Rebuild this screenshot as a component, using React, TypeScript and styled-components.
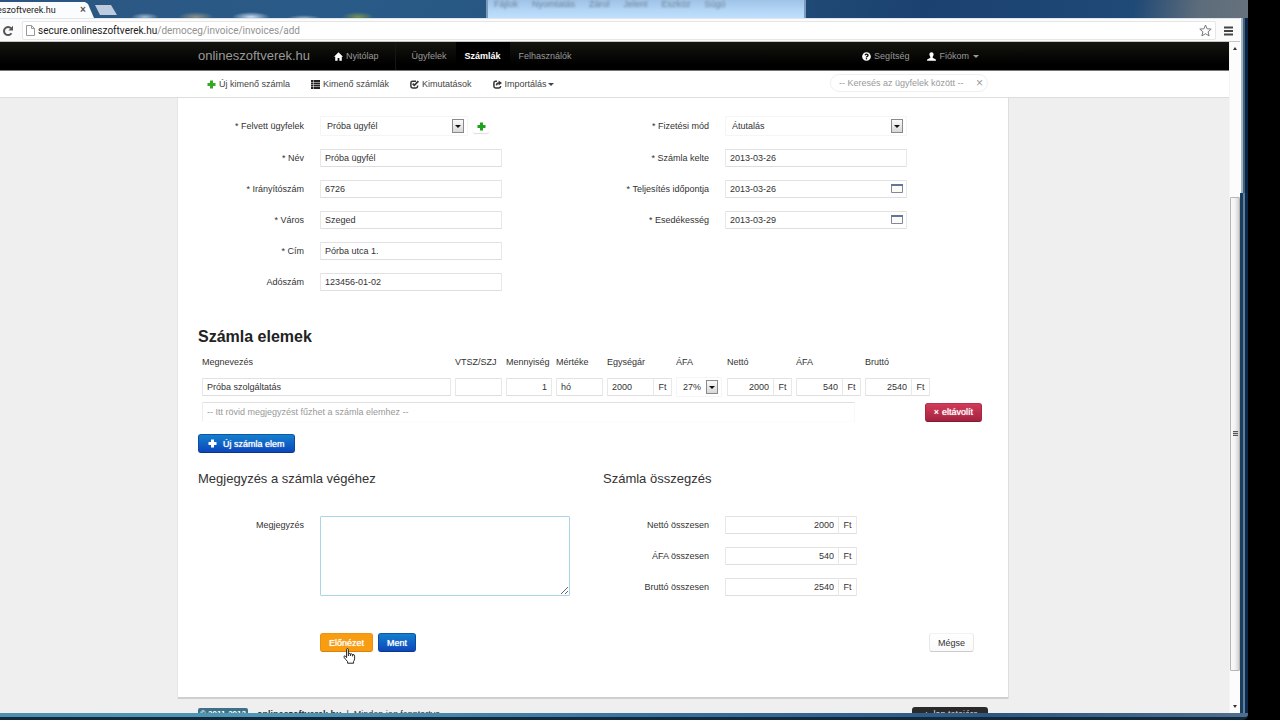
import React from "react";
import styled, { createGlobalStyle, css } from "styled-components";
import { FaQuestionCircle } from "react-icons/fa";

const GlobalStyle = createGlobalStyle`
  *, *::before, *::after { box-sizing: border-box; }
  body {
    margin: 0;
    background: #000;
    color: #333;
    font: 9px/18px "Liberation Sans", Arial, sans-serif;
  }
  input, select, textarea, button { font: inherit; color: inherit; margin: 0; }
  a { color: inherit; text-decoration: none; }
  svg { display: block; flex: none; }
`;

/* ---------- desktop and browser window ---------- */

const Desktop = styled.div`
  height: 100vh;
  padding-right: 32px;
  display: flex;
  overflow: hidden;
  background: #000;
`;

const BrowserWindow = styled.div`
  flex: 1;
  min-width: 0;
  margin-left: -43px;
  display: grid;
  grid-template-columns: minmax(0, 1fr) 8px;
  grid-template-rows: 18px 24px minmax(0, 1fr) 7px;
`;

const TitleBar = styled.div`
  grid-column: 1 / -1;
  display: flex;
  align-items: flex-end;
  overflow: hidden;
  background:
    radial-gradient(ellipse 14px 4px at 188px 17px, #9db6cc, transparent),
    radial-gradient(ellipse 18px 5px at 239px 17px, #8a9087, transparent),
    radial-gradient(ellipse 19px 5px at 294px 17px, #c9dcee, transparent),
    radial-gradient(ellipse 17px 3px at 347px 18px, #8fa9be, transparent),
    radial-gradient(ellipse 16px 5px at 401px 17px, #77914f, transparent),
    linear-gradient(100deg, #2c5580 0, #2a5b88 30%, #225078 60%, #1b4170 75%, #1f4976 91%, #5d6c7b 96%, #66727d 100%);
`;

const Tab = styled.div`
  width: 137px;
  height: 16px;
  padding: 0 6px 0 35px;
  display: flex;
  align-items: center;
  justify-content: space-between;
  background: #fbfcfd;
  clip-path: polygon(0 0, 128px 0, 131px 2px, 137px 16px, 0 16px);
  font: 9px/16px Roboto, sans-serif;
  color: #222;
`;

const TabClose = styled.button`
  width: 10px;
  height: 12px;
  padding: 0;
  border: 0;
  background: none;
  font: bold 10px/12px "Liberation Sans", sans-serif;
  color: #555;
`;

const NewTab = styled.button`
  width: 22px;
  height: 10px;
  margin: 0 0 3px 1px;
  padding: 0;
  border: 0;
  background: #bccbdd;
  clip-path: polygon(0 0, 16px 0, 22px 10px, 5px 10px);
`;

const BackgroundWindow = styled.div`
  width: 320px;
  height: 18px;
  margin-left: 369px;
  padding: 0 6px;
  display: flex;
  gap: 14px;
  border: solid #7d9cbb;
  border-width: 0 2px;
  background: linear-gradient(#9fc3e6, #b4d6f7 60%, #bfe0fb);
  color: #6c8297;
  line-height: 8px;

  span { filter: blur(1px); }
`;

const Toolbar = styled.div`
  padding: 3px 7px 2px 45px;
  display: flex;
  align-items: center;
  gap: 8px;
  background: #fbfbfb;
  border-top: 1px solid #dfe6ee;
  border-bottom: 1px solid #c5c5c5;
`;

const ToolButton = styled.button`
  padding: 0;
  border: 0;
  background: none;
  display: flex;
  color: #555;
`;

const AddressBox = styled.div`
  flex: 1;
  height: 19px;
  padding: 0 3px;
  display: flex;
  align-items: center;
  gap: 3px;
  background: #fff;
  border: 1px solid #e6e6e6;
  border-radius: 2px;
`;

const Address = styled.div`
  flex: 1;
  font: 10px/16px Roboto, sans-serif;
  color: #929292;

  b { font-weight: 400; color: #222; }
`;

const Edge = styled.div`
  grid-row: 2 / 4;
  grid-column: 2;
  background:
    linear-gradient(90deg, transparent 3px, #5f7f9f 3px, #5f7f9f 5px, #0d2848 5px) 0 100% / 8px calc(100% - 175px) no-repeat,
    linear-gradient(90deg, #fff 1px, #a3b4c2 1px, #a3b4c2 3px, #44607a 3px, #44607a 5px, #0b2544 5px) 0 0 / 8px 175px no-repeat,
    #1a3e5c;
`;

const BottomEdge = styled.div`
  grid-column: 1 / -1;
  border-bottom: 3px solid #12293c;
  border-bottom-right-radius: 5px;
  background: linear-gradient(90deg, #4c8fae, #4f97b6 25%, #39719b 55%, #2d5782 80%, #4f6f8e);
`;

const Viewport = styled.div`
  display: flex;
  overflow: hidden;
  background: #efefef;
`;

const Page = styled.div`
  flex: 1;
  min-width: 0;
`;

const ScrollBar = styled.div`
  width: 11px;
  display: flex;
  flex-direction: column;
  align-items: center;
  background: #fcfcfc;
  border-left: 1px solid #f4f4f4;
`;

const ScrollArrow = styled.div<{ $down?: boolean }>`
  height: 13px;
  display: flex;
  align-items: center;

  &::before {
    content: "";
    border: 2px solid transparent;
    ${(p) =>
      p.$down
        ? "border-top: 3px solid #333; border-bottom: 0;"
        : "border-bottom: 3px solid #333; border-top: 0;"}
  }
`;

const ScrollGap = styled.div<{ $grow: number }>`
  flex: ${(p) => p.$grow} 1 0;
`;

const ScrollThumb = styled.div`
  flex: 474 1 0;
  width: 10px;
  display: flex;
  align-items: center;
  justify-content: center;
  border: 1px solid #b5b5b5;
  border-radius: 1px;
  background: linear-gradient(90deg, #fafafa, #f2f2f2 50%, #d2d2d2);

  &::before {
    content: "";
    width: 5px;
    height: 5px;
    background: repeating-linear-gradient(#555 0, #555 1px, #ccc 1px, #ccc 2px);
  }
`;

/* ---------- site header ---------- */

const Container = styled.div`
  max-width: 790px;
  margin: 0 auto;
  display: flex;
  align-items: center;
`;

const NavBar = styled.header`
  height: 29px;
  background: linear-gradient(#14150f, #000 80%);
  border-bottom: 1px solid #777;
  color: #999;
`;

const Brand = styled.a`
  margin-right: 15px;
  font-size: 13px;
  line-height: 28px;
`;

const NavLink = styled.a<{ $active?: boolean }>`
  padding: 0 9px;
  display: flex;
  align-items: center;
  gap: 3px;
  line-height: 28px;

  svg { color: #fff; }

  ${(p) =>
    p.$active &&
    css`
      background: #000;
      color: #fff;
      font-weight: 700;
    `}
`;

const Divider = styled.span`
  width: 1px;
  height: 28px;
  margin: 0 7px;
  background: #161616;
`;

const Spacer = styled.div`
  flex: 1;
`;

const Caret = styled.span`
  margin-left: 1px;
  border: 3px solid transparent;
  border-top-color: currentColor;
  border-bottom: 0;
`;

const SubBar = styled.nav`
  height: 27px;
  background: #fff;
  border-bottom: 1px solid #ddd;
  color: #444;
`;

const SubLink = styled.a`
  padding: 0 12px 0 9px;
  display: flex;
  align-items: center;
  gap: 3px;
  line-height: 27px;

  ${Caret} { margin-left: -2px; }
`;

const SearchBox = styled.div`
  width: 158px;
  height: 18px;
  margin-bottom: 3px;
  padding: 0 4px 0 8px;
  display: flex;
  align-items: center;
  border: 1px solid #efefef;
  border-radius: 9px;

  input {
    flex: 1;
    min-width: 0;
    padding: 0;
    border: 0;
    outline: 0;
    background: none;
    line-height: 14px;
  }
  input::placeholder { color: #999; opacity: 1; }
  button {
    padding: 0;
    border: 0;
    background: none;
    color: #999;
    font-size: 12px;
    line-height: 14px;
  }
`;

/* ---------- invoice form ---------- */

const Card = styled.form`
  max-width: 830px;
  margin: 0 auto;
  padding: 18px 20px 45px;
  background: #fff;
  border-bottom: 2px solid #cfcfcf;
  box-shadow: 1px 0 0 #ddd, -1px 0 0 #e6e6e6;
`;

const Columns = styled.div`
  display: grid;
  grid-template-columns: minmax(0, 1fr) minmax(0, 1fr);
  column-gap: 20px;
`;

const Fields = styled.div`
  display: grid;
  align-content: start;
  row-gap: 13px;
`;

const Field = styled.div<{ $top?: boolean }>`
  display: flex;
  align-items: ${(p) => (p.$top ? "flex-start" : "center")};

  > label {
    width: 106px;
    margin-right: 16px;
    text-align: right;
  }
`;

const control = css`
  height: 18px;
  padding: 0 4px;
  background: #fff;
  border: 1px solid;
  border-color: #e2e2e2 #e8e8e8 #dedede;
  border-radius: 1px;
  outline: 0;
  line-height: 16px;
`;

const TextInput = styled.input<{ $right?: boolean }>`
  ${control}
  width: 100%;
  min-width: 0;
  text-align: ${(p) => (p.$right ? "right" : "left")};
  &::placeholder { color: #999; opacity: 1; }
`;

const InputBox = styled.div<{ $width: number }>`
  position: relative;
  width: ${(p) => p.$width}px;
  display: flex;
`;

const DateButton = styled.button`
  position: absolute;
  top: 4px;
  right: 4px;
  padding: 0;
  border: 0;
  background: none;
`;

const Unit = styled.span`
  width: 18px;
  height: 18px;
  flex: none;
  border: 1px solid;
  border-color: #e2e2e2 #e8e8e8 #dedede;
  border-left: 0;
  border-radius: 0 1px 1px 0;
  line-height: 16px;
  text-align: center;
`;

const SelectBox = styled.div<{ $width: number }>`
  position: relative;
  width: ${(p) => p.$width}px;

  select {
    ${control}
    display: block;
    width: 100%;
    height: 20px;
    padding: 0 6px;
    border-color: #f5f5f5;
    line-height: 18px;
    appearance: none;
  }

  &::before {
    content: "";
    position: absolute;
    top: 3px;
    right: 4px;
    width: 12px;
    height: 14px;
    border: 1px solid #8a8a8a;
    background: linear-gradient(#fafafa, #d8d8d8);
    pointer-events: none;
  }
  &::after {
    content: "";
    position: absolute;
    top: 9px;
    right: 7px;
    border: 3px solid transparent;
    border-top-color: #111;
    border-bottom: 0;
    pointer-events: none;
  }
`;

const AddClient = styled.button`
  width: 16px;
  height: 14px;
  margin-left: 5px;
  padding: 0;
  display: flex;
  align-items: center;
  justify-content: center;
  border: 0;
  border-radius: 2px;
  background: #fff;
  box-shadow: 0 1px 1px #ddd;
  color: #1fa01f;
`;

const Title = styled.h2`
  margin: 36px 0 0;
  font: bold 16px/20px "Liberation Sans", Arial, sans-serif;
  color: #222;
`;

const Subtitle = styled.h3`
  margin: 16px 0 27px;
  font: 13px/20px "Liberation Sans", Arial, sans-serif;
`;

const Items = styled.table`
  width: 100%;
  table-layout: fixed;
  border-collapse: collapse;

  th {
    padding: 6px 0 7px 4px;
    font-weight: 400;
    text-align: left;
    white-space: nowrap;
  }
  td {
    padding: 0 0 6px 4px;
    vertical-align: top;
  }
  tr:last-child td { padding-bottom: 0; }
  ${SelectBox} { margin: -1px 0; }
`;

const NoteRow = styled.div`
  padding-right: 6px;
  display: flex;
  align-items: center;
  justify-content: space-between;

  ${TextInput} {
    width: 653px;
    height: 20px;
    border-color: #e0e0e0 #f8f8f8 #fcfcfc #eee;
  }
`;

const tones = {
  blue: css`background: linear-gradient(#1480cc, #0c46bd); border-color: #0f55ad #0d49a4 #0a3683; color: #fff;`,
  red: css`background: linear-gradient(#d23a58, #a32340); border-color: #b53350 #a52844 #81192f; color: #fff;`,
  orange: css`background: #f89c12; border-color: #ee9413 #ea8f10 #d98207; color: #fff;`,
  plain: css`background: linear-gradient(#fff, #fafafa); border-color: #f2f2f2 #e8e8e8 #ccc; color: #333;`,
};

const Button = styled.button<{ $tone: keyof typeof tones }>`
  position: relative;
  height: 19px;
  padding: 0 8px;
  display: inline-flex;
  align-items: center;
  gap: 6px;
  border: 1px solid;
  border-radius: 3px;
  line-height: 16px;
  ${(p) => tones[p.$tone]}
  text-shadow: ${(p) => (p.$tone === "plain" ? "none" : "0 0 1px currentColor")};
`;

const AddItem = styled(Button)`
  margin-top: 12px;
  padding: 0 9px;
  display: flex;
`;

const RemoveItem = styled(Button)`
  gap: 3px;
`;

const NoteArea = styled.textarea`
  ${control}
  width: 250px;
  height: 80px;
  border-color: #a9d6e6;
`;

const Actions = styled.div`
  margin-top: 37px;
  padding: 0 14px 0 122px;
  display: flex;
  gap: 5px;
`;

const Pointer = styled.svg`
  position: absolute;
  top: 14px;
  left: 22px;
  z-index: 1;
`;

/* ---------- footer ---------- */

const Footer = styled.footer`
  max-width: 790px;
  margin: 0 auto;
  padding-top: 8px;
  display: flex;
  align-items: flex-start;
  gap: 9px;
`;

const Badge = styled.span`
  margin-top: 1px;
  padding: 0 2px;
  border-radius: 2px;
  background: #3d7187;
  color: #fff;
  font-weight: 700;
  font-size: 8px;
  line-height: 11px;
`;

const Copyright = styled.span`
  line-height: 14px;
`;

const TopLink = styled.a`
  width: 76px;
  border-radius: 3px 3px 0 0;
  background: #2a2a2a;
  color: #ddd;
  line-height: 15px;
  text-align: center;
`;

/* ---------- drawings ---------- */

const ReloadIcon = () => (
  <svg width="12" height="12" viewBox="0 0 12 12" fill="none" stroke="#555" strokeWidth="2">
    <path d="M9.4 8.2A4 4 0 1 1 9 3.4" />
    <path d="M11 .8V5.4H6.4Z" fill="#555" stroke="none" />
  </svg>
);

const PageIcon = () => (
  <svg width="9" height="11" viewBox="0 0 9 11" fill="#fff" stroke="#999">
    <path d="M.5.5H5.5L8.5 3.5V10.5H.5ZM5.5.5V3.5H8.5" />
  </svg>
);

const StarIcon = () => (
  <svg width="13" height="13" viewBox="0 0 13 13" fill="#fff" stroke="#777">
    <path d="M6.5 1 8.1 4.8 12.2 5.1 9.1 7.8 10.1 11.9 6.5 9.7 2.9 11.9 3.9 7.8.8 5.1 4.9 4.8Z" />
  </svg>
);

const MenuIcon = () => (
  <svg width="9" height="10" viewBox="0 0 9 10" stroke="#444" strokeWidth="2">
    <path d="M0 1.5H9M0 5H9M0 8.5H9" />
  </svg>
);

const HomeIcon = () => (
  <svg width="9" height="9" viewBox="0 0 9 9" fill="currentColor">
    <path d="M4.5.3 9 4.8H7.8V8.7H5.4V6H3.6V8.7H1.2V4.8H0Z" />
  </svg>
);

const UserIcon = () => (
  <svg width="9" height="9" viewBox="0 0 9 9" fill="currentColor">
    <path d="M4.5.2C6 .2 6.7 1.2 6.6 2.6 6.5 3.8 6 4.4 5.6 5 5.6 6 6 6.2 7.4 6.7 8.6 7.1 9 7.5 9 8.7H0C0 7.5.4 7.1 1.6 6.7 3 6.2 3.4 6 3.4 5 3 4.4 2.5 3.8 2.4 2.6 2.3 1.2 3 .2 4.5.2Z" />
  </svg>
);

const ListIcon = () => (
  <svg width="9" height="9" viewBox="0 0 9 9" fill="#222">
    <path d="M0 0H2V2H0ZM2.5 0H9V2H2.5ZM0 2.4H2V4.3H0ZM2.5 2.4H9V4.3H2.5ZM0 4.7H2V6.6H0ZM2.5 4.7H9V6.6H2.5ZM0 7H2V9H0ZM2.5 7H9V9H2.5Z" />
  </svg>
);

const PlusIcon = () => (
  <svg width="9" height="9" viewBox="0 0 9 9" fill="currentColor">
    <path d="M3 .5H6V3H8.5V6H6V8.5H3V6H.5V3H3Z" />
  </svg>
);

const GreenPlus = styled(PlusIcon)``;

const Green = styled.span`
  color: #35a825;
`;

const CheckIcon = () => (
  <svg width="9" height="9" viewBox="0 0 9 9" fill="none" stroke="#333" strokeWidth="1.5">
    <path d="M6 1.2H2.6Q.9 1.2.9 2.9V6.3Q.9 8 2.6 8H5.9Q7.6 8 7.6 6.3V5.4" />
    <path d="M2.7 3.7 4.3 5.3 8.4 1.2" strokeWidth="1.8" />
  </svg>
);

const ImportIcon = () => (
  <svg width="9" height="9" viewBox="0 0 9 9" fill="none" stroke="#333" strokeWidth="1.5">
    <path d="M4 1.2H2.6Q.9 1.2.9 2.9V6.3Q.9 8 2.6 8H5.9Q7.6 8 7.6 6.3V6" />
    <path d="M3.4 5.4Q3.6 3 6 3" />
    <path d="M5.6.6 9 3 5.6 5.4Z" fill="#333" stroke="none" />
  </svg>
);

const CalendarIcon = () => (
  <svg width="12" height="9" viewBox="0 0 12 9">
    <path d="M.5.5H11.5V8.5H.5Z" fill="#fbfbf6" stroke="#8087a0" />
    <path d="M0 0H12V2H0Z" fill="#66739c" />
  </svg>
);

const HandPointer = () => (
  <Pointer width="13" height="16" viewBox="0 0 13 16" fill="#fff" stroke="#222" strokeLinejoin="round">
    <path d="M3.6 9.6V1.6Q3.6.6 4.5.6T5.4 1.6V5.6Q7.2 4.8 7.4 6 9 5.3 9.4 6.6 11.6 6 11.6 8.2V10.8Q11.4 12.4 10.6 13.4V15.2H4.6V13.6Q2.6 11.6 1 9.2.6 8 1.8 7.9 2.8 8.3 3.6 9.6Z" />
    <path d="M5.4 5.6V8M7.4 6V8M9.4 6.6V8.4" />
  </Pointer>
);

/* ---------- page ---------- */

type TextFieldProps = { id: string; label: string; value: string; date?: boolean };

const TextField = ({ id, label, value, date }: TextFieldProps) => (
  <Field>
    <label htmlFor={id}>{label}</label>
    <InputBox $width={182}>
      <TextInput id={id} defaultValue={value} />
      {date && (
        <DateButton type="button" aria-label="Dátum választása">
          <CalendarIcon />
        </DateButton>
      )}
    </InputBox>
  </Field>
);

const TotalField = ({ id, label, value }: TextFieldProps) => (
  <Field>
    <label htmlFor={id}>{label}</label>
    <InputBox $width={132}>
      <TextInput id={id} defaultValue={value} $right />
      <Unit>Ft</Unit>
    </InputBox>
  </Field>
);

const MoneyCell = ({ label, value, left }: { label: string; value: string; left?: boolean }) => (
  <td>
    <InputBox $width={65}>
      <TextInput aria-label={label} defaultValue={value} $right={!left} />
      <Unit>Ft</Unit>
    </InputBox>
  </td>
);

const itemColumns: { name: string; width?: number }[] = [
  { name: "Megnevezés" },
  { name: "VTSZ/SZJ", width: 51 },
  { name: "Mennyiség", width: 50 },
  { name: "Mértéke", width: 51 },
  { name: "Egységár", width: 69 },
  { name: "ÁFA", width: 51 },
  { name: "Nettó", width: 69 },
  { name: "ÁFA", width: 69 },
  { name: "Bruttó", width: 69 },
  { name: "", width: 58 },
];

export default function App() {
  return (
    <Desktop>
      <GlobalStyle />
      <BrowserWindow>
        <TitleBar>
          <Tab>
            neszoftverek.hu
            <TabClose aria-label="Lap bezárása">×</TabClose>
          </Tab>
          <NewTab aria-label="Új lap" />
          <BackgroundWindow>
            <span>Fájlok</span>
            <span>Nyomtatás</span>
            <span>Zárol</span>
            <span>Jelent</span>
            <span>Eszköz</span>
            <span>Súgó</span>
          </BackgroundWindow>
        </TitleBar>

        <Toolbar>
          <ToolButton aria-label="Frissítés"><ReloadIcon /></ToolButton>
          <AddressBox>
            <PageIcon />
            <Address><b>secure.onlineszoftverek.hu</b>/democeg/invoice/invoices/add</Address>
            <ToolButton aria-label="Könyvjelző"><StarIcon /></ToolButton>
          </AddressBox>
          <ToolButton aria-label="Menü"><MenuIcon /></ToolButton>
        </Toolbar>
        <Edge />

        <Viewport>
          <Page>
            <NavBar>
              <Container as="nav">
                <Brand href="#">onlineszoftverek.hu</Brand>
                <NavLink href="#"><HomeIcon />Nyitólap</NavLink>
                <Divider />
                <NavLink href="#">Ügyfelek</NavLink>
                <NavLink href="#" $active>Számlák</NavLink>
                <NavLink href="#">Felhasználók</NavLink>
                <Spacer />
                <NavLink href="#"><FaQuestionCircle size={9} />Segítség</NavLink>
                <NavLink href="#"><UserIcon />Fiókom<Caret /></NavLink>
              </Container>
            </NavBar>
            <SubBar>
              <Container>
                <SubLink href="#"><Green><PlusIcon /></Green>Új kimenő számla</SubLink>
                <SubLink href="#"><ListIcon />Kimenő számlák</SubLink>
                <SubLink href="#"><CheckIcon />Kimutatások</SubLink>
                <SubLink href="#"><ImportIcon />Importálás<Caret /></SubLink>
                <Spacer />
                <SearchBox>
                  <input aria-label="Keresés" placeholder="-- Keresés az ügyfelek között --" />
                  <button type="button" aria-label="Törlés">×</button>
                </SearchBox>
              </Container>
            </SubBar>

            <Card>
              <Columns>
                <Fields>
                  <Field>
                    <label htmlFor="client">* Felvett ügyfelek</label>
                    <SelectBox $width={148}>
                      <select id="client"><option>Próba ügyfél</option></select>
                    </SelectBox>
                    <AddClient type="button" aria-label="Új ügyfél"><PlusIcon /></AddClient>
                  </Field>
                  <TextField id="name" label="* Név" value="Próba ügyfél" />
                  <TextField id="zip" label="* Irányítószám" value="6726" />
                  <TextField id="city" label="* Város" value="Szeged" />
                  <TextField id="address" label="* Cím" value="Pórba utca 1." />
                  <TextField id="tax" label="Adószám" value="123456-01-02" />
                </Fields>
                <Fields>
                  <Field>
                    <label htmlFor="payment">* Fizetési mód</label>
                    <SelectBox $width={182}>
                      <select id="payment"><option>Átutalás</option></select>
                    </SelectBox>
                  </Field>
                  <TextField id="issued" label="* Számla kelte" value="2013-03-26" />
                  <TextField id="fulfilled" label="* Teljesítés időpontja" value="2013-03-26" date />
                  <TextField id="due" label="* Esedékesség" value="2013-03-29" date />
                </Fields>
              </Columns>

              <Title>Számla elemek</Title>
              <Items>
                <colgroup>
                  {itemColumns.map((c, i) => <col key={i} width={c.width} />)}
                </colgroup>
                <thead>
                  <tr>{itemColumns.map((c, i) => <th key={i}>{c.name}</th>)}</tr>
                </thead>
                <tbody>
                  <tr>
                    <td><TextInput aria-label="Megnevezés" defaultValue="Próba szolgáltatás" /></td>
                    <td><TextInput aria-label="VTSZ/SZJ" /></td>
                    <td><TextInput aria-label="Mennyiség" defaultValue="1" $right /></td>
                    <td><TextInput aria-label="Mértéke" defaultValue="hó" /></td>
                    <MoneyCell label="Egységár" value="2000" left />
                    <td>
                      <SelectBox $width={46}>
                        <select aria-label="ÁFA kulcs"><option>27%</option></select>
                      </SelectBox>
                    </td>
                    <MoneyCell label="Nettó" value="2000" />
                    <MoneyCell label="ÁFA" value="540" />
                    <MoneyCell label="Bruttó" value="2540" />
                    <td />
                  </tr>
                  <tr>
                    <td colSpan={10}>
                      <NoteRow>
                        <TextInput aria-label="Tétel megjegyzése" placeholder="-- Itt rövid megjegyzést fűzhet a számla elemhez --" />
                        <RemoveItem type="button" $tone="red"><span>×</span>eltávolít</RemoveItem>
                      </NoteRow>
                    </td>
                  </tr>
                </tbody>
              </Items>
              <AddItem type="button" $tone="blue"><PlusIcon />Új számla elem</AddItem>

              <Columns>
                <div>
                  <Subtitle>Megjegyzés a számla végéhez</Subtitle>
                  <Field $top>
                    <label htmlFor="note">Megjegyzés</label>
                    <NoteArea id="note" />
                  </Field>
                </div>
                <div>
                  <Subtitle>Számla összegzés</Subtitle>
                  <Fields>
                    <TotalField id="net" label="Nettó összesen" value="2000" />
                    <TotalField id="vat" label="ÁFA összesen" value="540" />
                    <TotalField id="gross" label="Bruttó összesen" value="2540" />
                  </Fields>
                </div>
              </Columns>

              <Actions>
                <Button type="button" $tone="orange">Előnézet<HandPointer /></Button>
                <Button type="button" $tone="blue">Ment</Button>
                <Spacer />
                <Button type="button" $tone="plain">Mégse</Button>
              </Actions>
            </Card>

            <Footer>
              <Badge>© 2011-2013</Badge>
              <Copyright><b>onlineszoftverek.hu</b> &nbsp;|&nbsp; Minden jog fenntartva</Copyright>
              <Spacer />
              <TopLink href="#">▲ lap tetejére</TopLink>
            </Footer>
          </Page>
          <ScrollBar>
            <ScrollArrow />
            <ScrollGap $grow={142} />
            <ScrollThumb />
            <ScrollGap $grow={29} />
            <ScrollArrow $down />
          </ScrollBar>
        </Viewport>
        <BottomEdge />
      </BrowserWindow>
    </Desktop>
  );
}
